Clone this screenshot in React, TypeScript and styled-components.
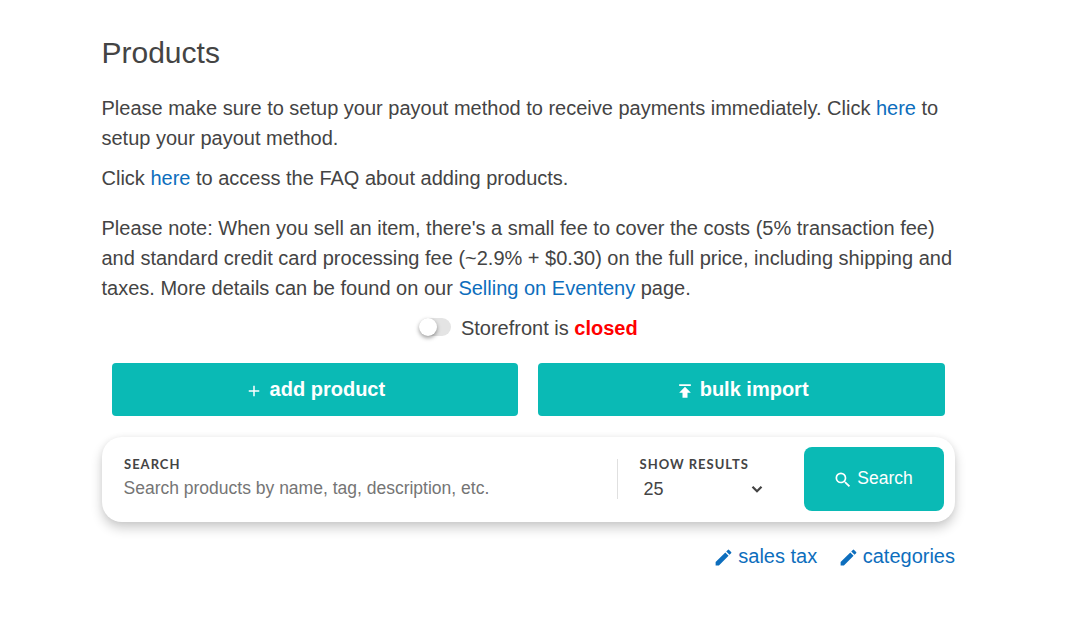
import React from "react";
import styled, { createGlobalStyle } from "styled-components";

const Global = createGlobalStyle`
  html, body { margin: 0; padding: 0; background: #fff; }
  body { font-family: "Liberation Sans", Arial, sans-serif; color: #444; }
`;

const Page = styled.main`
  width: 853.5px;
  margin-left: 101.5px;
  padding-top: 34px;
`;
const Title = styled.h1`
  margin: 0 0 21px;
  font-size: 30px;
  line-height: 38px;
  font-weight: 400;
  color: #444;
`;
const Para = styled.p<{ $gap: number }>`
  margin: 0 0 ${(p) => p.$gap}px;
  font-size: 20px;
  line-height: 30px;
`;
const Link = styled.a`
  color: #0d6ebd;
  text-decoration: none;
`;
const StoreRow = styled.div`
  display: flex;
  justify-content: center;
  align-items: center;
  gap: 10px;
  height: 30px;
  margin-top: 10px;
  font-size: 20px;
`;
const Toggle = styled.span`
  position: relative;
  display: block;
  width: 32px;
  height: 18px;
  margin-top: -3px;
  border-radius: 9px;
  background: #e4e4e4;
`;
const Knob = styled.span`
  position: absolute;
  left: 0;
  top: 0;
  width: 18px;
  height: 18px;
  border-radius: 50%;
  background: #fff;
  box-shadow: 0 2px 4px rgba(0, 0, 0, 0.4);
`;
const Closed = styled.b`
  color: #f00;
`;
const ButtonRow = styled.div`
  display: flex;
  gap: 20px;
  margin: 20px 10px 0;
`;
const BigButton = styled.button<{ $gap: number }>`
  flex: 1;
  height: 53px;
  display: flex;
  align-items: center;
  justify-content: center;
  gap: ${(p) => p.$gap}px;
  border: 0;
  border-radius: 4px;
  background: #0abab5;
  color: #fff;
  font: 700 20px "Liberation Sans", Arial, sans-serif;
`;
const Card = styled.section`
  display: flex;
  align-items: center;
  height: 84.5px;
  margin-top: 21px;
  border-radius: 20px;
  background: #fff;
  box-shadow: 0 6px 12px rgba(0, 0, 0, 0.2), 0 0 6px rgba(0, 0, 0, 0.05);
`;
const SearchField = styled.div`
  box-sizing: border-box;
  flex: none;
  width: 515.5px;
  padding-left: 22px;
  padding-bottom: 2px;
`;
const Label = styled.div`
  font: 700 13px/16px Lato, sans-serif;
  letter-spacing: 1px;
  color: #444;
  padding-left: 0.5px;
`;
const Placeholder = styled.div`
  margin-top: 4px;
  font-size: 17.5px;
  line-height: 24px;
  color: #757575;
  white-space: nowrap;
`;
const ResultsField = styled.div`
  flex: none;
  width: 165px;
  height: 40px;
  padding-left: 21px;
  border-left: 1px solid #e0e0e0;
  box-sizing: border-box;
  margin-right: 22px;
`;
const ResultsLabel = styled(Label)`
  margin-top: -3px;
`;
const SelectRow = styled.div`
  display: flex;
  align-items: center;
  justify-content: space-between;
  width: 126.5px;
  margin-top: 6px;
  padding-left: 4.5px;
  box-sizing: border-box;
  font-size: 18px;
  line-height: 22px;
  color: #444;
`;
const SearchButton = styled.button`
  flex: none;
  width: 140px;
  height: 64px;
  display: flex;
  align-items: center;
  justify-content: center;
  gap: 4px;
  padding: 0 2px 2px 0;
  border: 0;
  border-radius: 8px;
  background: #0abab5;
  color: #fff;
  font: 400 17.5px "Liberation Sans", Arial, sans-serif;
`;
const Actions = styled.div`
  display: flex;
  justify-content: flex-end;
  gap: 20.5px;
  margin-top: 22.5px;
  font-size: 20px;
  line-height: 24px;
`;
const Action = styled(Link)`
  display: flex;
  align-items: center;
  gap: 4px;
`;

const Pencil = () => (
  <svg width="21" height="21" viewBox="0 0 24 24" fill="#0d6ebd" style={{ marginTop: 3 }}>
    <path d="M3 17.25V21h3.75L17.81 9.94l-3.75-3.75L3 17.25zM20.71 7.04a1 1 0 0 0 0-1.41l-2.34-2.34a1 1 0 0 0-1.41 0l-1.83 1.83 3.75 3.75 1.83-1.83z" />
  </svg>
);

export default function App() {
  return (
    <Page>
      <Global />
      <Title>Products</Title>
      <Para $gap={10}>
        Please make sure to setup your payout method to receive payments immediately. Click <Link>here</Link> to setup your payout method.
      </Para>
      <Para $gap={20}>
        Click <Link>here</Link> to access the FAQ about adding products.
      </Para>
      <Para $gap={0}>
        Please note: When you sell an item, there's a small fee to cover the costs (5% transaction fee) and standard credit card processing fee (~2.9% + $0.30) on the full price, including shipping and taxes. More details can be found on our <Link>Selling on Eventeny</Link> page.
      </Para>
      <StoreRow>
        <Toggle><Knob /></Toggle>
        <span>Storefront is <Closed>closed</Closed></span>
      </StoreRow>
      <ButtonRow>
        <BigButton $gap={7}>
          <svg width="18" height="18" viewBox="0 0 24 24" fill="#fff" style={{ marginTop: 3 }}>
            <path d="M19 13h-6v6h-2v-6H5v-2h6V5h2v6h6v2z" />
          </svg>
          add product
        </BigButton>
        <BigButton $gap={5}>
          <svg width="20" height="20" viewBox="0 0 24 24" fill="#fff" style={{ marginTop: 2 }}>
            <path d="M5 4v2h14V4H5zm0 10h4v6h6v-6h4l-7-7-7 7z" />
          </svg>
          bulk import
        </BigButton>
      </ButtonRow>
      <Card>
        <SearchField>
          <Label>SEARCH</Label>
          <Placeholder>Search products by name, tag, description, etc.</Placeholder>
        </SearchField>
        <ResultsField>
          <ResultsLabel>SHOW RESULTS</ResultsLabel>
          <SelectRow>
            25
            <svg width="18" height="18" viewBox="0 0 24 24" fill="none" stroke="#444" strokeWidth="3">
              <path d="M6 9l6 6 6-6" />
            </svg>
          </SelectRow>
        </ResultsField>
        <SearchButton>
          <svg width="20" height="20" viewBox="0 0 24 24" fill="#fff" style={{ marginTop: 4 }}>
            <path d="M15.5 14h-.79l-.28-.27A6.47 6.47 0 0 0 16 9.5 6.5 6.5 0 1 0 9.5 16c1.61 0 3.09-.59 4.23-1.57l.27.28v.79l5 4.99L20.49 19l-4.99-5zm-6 0C7.01 14 5 11.99 5 9.5S7.01 5 9.5 5 14 7.01 14 9.5 11.99 14 9.5 14z" />
          </svg>
          Search
        </SearchButton>
      </Card>
      <Actions>
        <Action><Pencil />sales tax</Action>
        <Action><Pencil />categories</Action>
      </Actions>
    </Page>
  );
}
